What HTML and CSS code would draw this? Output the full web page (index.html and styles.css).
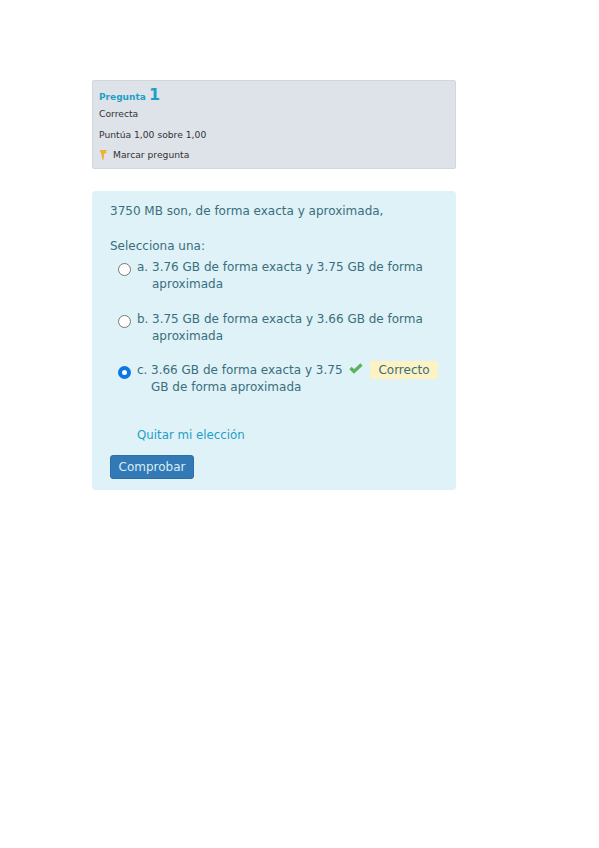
FILE: index.html
```html
<!DOCTYPE html>
<html lang="es">
<head>
    <meta charset="UTF-8">
    <meta name="viewport" content="width=device-width, initial-scale=1.0">
    <title>Pregunta 1</title>
    <link rel="stylesheet" href="styles.css">
</head>
<body>

<div class="page">
    <div class="info">
        <h3 class="qno">Pregunta <span class="num">1</span></h3>
        <div class="state">Correcta</div>
        <div class="grade">Puntúa 1,00 sobre 1,00</div>
        <div class="flag">
            <svg class="flag-icon" width="9" height="12" viewBox="0 0 9 12"><path d="M0.5 1H8.5L6.6 2.4L8 3.8L5.2 4.8L4.6 10.5H3.2L2.4 5Z" fill="#f0b232"/></svg>
            Marcar pregunta
        </div>
    </div>

    <div class="content">
        <p class="qtext">3750 MB son, de forma exacta y aproximada,</p>
        <p class="prompt">Selecciona una:</p>

        <div class="answer">
            <span class="radio"></span>
            <span class="letter">a.</span>
            <span class="text">3.76 GB de forma exacta y 3.75 GB de forma aproximada</span>
        </div>
        <div class="answer">
            <span class="radio"></span>
            <span class="letter">b.</span>
            <span class="text">3.75 GB de forma exacta y 3.66 GB de forma aproximada</span>
        </div>
        <div class="answer">
            <span class="radio checked"></span>
            <span class="letter">c.</span>
            <span class="text short">3.66 GB de forma exacta y 3.75 GB de forma aproximada</span>
            <svg class="check" width="14" height="11" viewBox="0 0 14 11"><path d="M1.5 5L5 8.5L12.5 1.5" fill="none" stroke="#5cb25c" stroke-width="3.2"/></svg>
            <span class="badge">Correcto</span>
        </div>

        <a class="clear" href="#">Quitar mi elección</a>
        <button class="submit">Comprobar</button>
    </div>
</div>

</body>
</html>
```

FILE: styles.css
```css
body {
    margin: 0;
    background: #fff;
    font-family: "DejaVu Sans", Verdana, sans-serif;
}
.page {
    width: 364px;
    margin-left: 92px;
    padding-top: 80px;
}
.info {
    height: 89px;
    box-sizing: border-box;
    padding: 5px 6px 0;
    background: #dee2e9;
    border: 1px solid #d3d6dd;
    border-radius: 2px;
    font-size: 9.2px;
    color: #333;
}
.qno {
    margin: 0;
    height: 17px;
    line-height: 17px;
    font-size: 9px;
    font-weight: bold;
    color: #1f9fc6;
}
.num {
    font-size: 16px;
}
.state {
    margin-top: 4px;
    line-height: 14px;
}
.grade {
    margin-top: 7px;
    line-height: 14px;
}
.flag {
    display: flex;
    align-items: center;
    margin-top: 6px;
    line-height: 14px;
}
.flag-icon {
    margin-right: 5px;
}
.content {
    height: 299px;
    box-sizing: border-box;
    margin-top: 22px;
    padding: 12px 18px 0;
    background: #def2f8;
    border-radius: 4px;
    font-size: 12px;
    line-height: 17px;
    color: #3b6e7c;
}
.qtext {
    margin: 0 0 18px;
}
.prompt {
    margin: 0 0 4px;
}
.answer {
    position: relative;
    display: flex;
    min-height: 34px;
    margin-bottom: 17.5px;
    padding-left: 27px;
}
.radio {
    position: absolute;
    left: 8px;
    top: 4px;
    width: 13px;
    height: 13px;
    box-sizing: border-box;
    background: #fff;
    border: 1.5px solid #777;
    border-radius: 50%;
}
.radio.checked {
    border: 4px solid #0a76e8;
}
.letter {
    width: 15px;
    flex: none;
}
.text {
    flex: 1;
}
.text.short {
    flex: none;
    width: 199px;
    margin-right: -1px;
    margin-left: -1px;
}
.check {
    position: absolute;
    left: 239px;
    top: 1px;
}
.badge {
    position: absolute;
    left: 260px;
    top: -1px;
    width: 68px;
    height: 18px;
    line-height: 18px;
    text-align: center;
    background: #fcf2c4;
}
.clear {
    display: block;
    margin: 0 0 11px 27px;
    padding-top: 13.5px;
    font-size: 11.8px;
    color: #1f9fc6;
    text-decoration: none;
}
.submit {
    display: block;
    width: 84px;
    height: 24px;
    padding: 0;
    font: inherit;
    color: #d5eef7;
    background: #3379b5;
    border: 1px solid #2c6ea8;
    border-radius: 3px;
}
```
